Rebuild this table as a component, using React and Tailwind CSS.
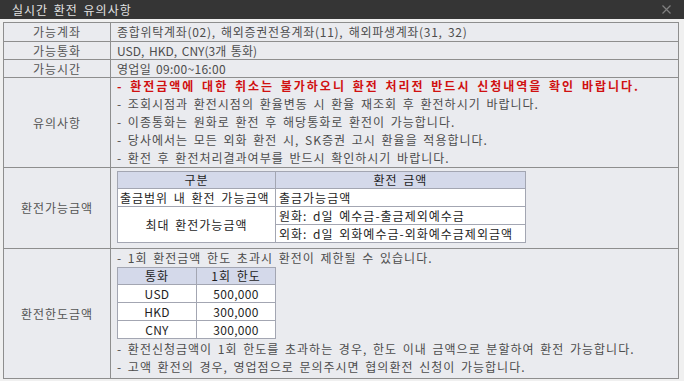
const font = { fontFamily: '"Noto Sans CJK KR", "Liberation Sans", sans-serif' };

const notes = [
  '- 조회시점과 환전시점의 환율변동 시 환율 재조회 후 환전하시기 바랍니다.',
  '- 이종통화는 원화로 환전 후 해당통화로 환전이 가능합니다.',
  '- 당사에서는 모든 외화 환전 시, SK증권 고시 환율을 적용합니다.',
  '- 환전 후 환전처리결과여부를 반드시 확인하시기 바랍니다.',
];

const limits = [
  ['USD', '500,000'],
  ['HKD', '300,000'],
  ['CNY', '300,000'],
];

const Row = ({ label, h, children, first }) => (
  <div className={`flex ${first ? '' : 'border-t border-[#8e8e8e]'}`} style={{ height: h }}>
    <div className="w-[107px] shrink-0 border-r border-[#8e8e8e] flex items-center justify-center text-[#555]">
      {label}
    </div>
    <div className="flex-1 pl-[6px] text-[#4d4d4d]">{children}</div>
  </div>
);

const App = () => {
  return (
    <div
      className="w-[684px] h-[381px] bg-[#f0f0f0] text-[12px] leading-[18px] tracking-[1px] [word-spacing:2px] overflow-hidden"
      style={font}
    >
      <div className="h-[19px] bg-[#353535] flex items-center justify-between pl-[12px] pr-[13px]">
        <span className="text-[#e2e2e2] text-[12px] leading-[19px]">실시간 환전 유의사항</span>
        <svg width="9" height="9" viewBox="0 0 9 9" className="mt-[-1px]">
          <path d="M0.5 0.5 L8.5 8.5 M8.5 0.5 L0.5 8.5" stroke="#808080" strokeWidth="1.2" />
        </svg>
      </div>

      <div className="mt-[3px] ml-[3px] w-[676px] border border-[#8e8e8e] bg-[#eaebef]">
        <Row label="가능계좌" h={18} first>
          <div className="leading-[18px] tracking-[0.7px]">종합위탁계좌(02), 해외증권전용계좌(11), 해외파생계좌(31, 32)</div>
        </Row>
        <Row label="가능통화" h={18}>
          <div className="leading-[17px] tracking-[0px]">USD, HKD, CNY(3개 통화)</div>
        </Row>
        <Row label="가능시간" h={18}>
          <div className="leading-[17px] tracking-[0.3px]">영업일 09:00~16:00</div>
        </Row>
        <Row label="유의사항" h={90}>
          <div className="font-bold text-[#d01010] tracking-[2px] [word-spacing:2px] leading-[18px] mt-[-1px] whitespace-nowrap">
            - 환전금액에 대한 취소는 불가하오니 환전 처리전 반드시 신청내역을 확인 바랍니다.
          </div>
          {notes.map((n, i) => (
            <div key={i} className="leading-[18px]">{n}</div>
          ))}
        </Row>
        <Row label="환전가능금액" h={81}>
          <div className="pt-[3px]">
            <div className="grid grid-cols-[157px_249px] grid-rows-[16px_17px_17px_17px] gap-px p-px bg-[#a3a6b2] w-[409px] text-[#1e1e1e] leading-[16px] whitespace-nowrap">
              <div className="bg-[#d4d9ea] text-center">구분</div>
              <div className="bg-[#d4d9ea] text-center">환전 금액</div>
              <div className="bg-white pl-[2px] leading-[17px]">출금범위 내 환전 가능금액</div>
              <div className="bg-white pl-[3px] leading-[17px]">출금가능금액</div>
              <div className="bg-white row-span-2 flex items-center justify-center">최대 환전가능금액</div>
              <div className="bg-white pl-[3px] leading-[17px]">원화: d일 예수금-출금제외예수금</div>
              <div className="bg-white pl-[3px] leading-[17px]">외화: d일 외화예수금-외화예수금제외금액</div>
            </div>
          </div>
        </Row>
        <Row label="환전한도금액" h={130}>
          <div className="leading-[18px]">- 1회 환전금액 한도 초과시 환전이 제한될 수 있습니다.</div>
          <div className="grid grid-cols-[78px_78px] grid-rows-[16px_17px_17px_17px] gap-px p-px bg-[#a3a6b2] w-[159px] text-[#1e1e1e] text-center leading-[17px] tracking-[0.3px]">
            <div className="bg-[#d4d9ea] leading-[16px] tracking-[1px]">통화</div>
            <div className="bg-[#d4d9ea] leading-[16px] tracking-[1px]">1회 한도</div>
            {limits.map(([c, v]) => [
              <div key={c} className="bg-white">{c}</div>,
              <div key={c + 'v'} className="bg-white">{v}</div>,
            ])}
          </div>
          <div className="leading-[18px] mt-[1px]">- 환전신청금액이 1회 한도를 초과하는 경우, 한도 이내 금액으로 분할하여 환전 가능합니다.</div>
          <div className="leading-[18px]">- 고액 환전의 경우, 영업점으로 문의주시면 협의환전 신청이 가능합니다.</div>
        </Row>
      </div>
    </div>
  );
};

export default App;
